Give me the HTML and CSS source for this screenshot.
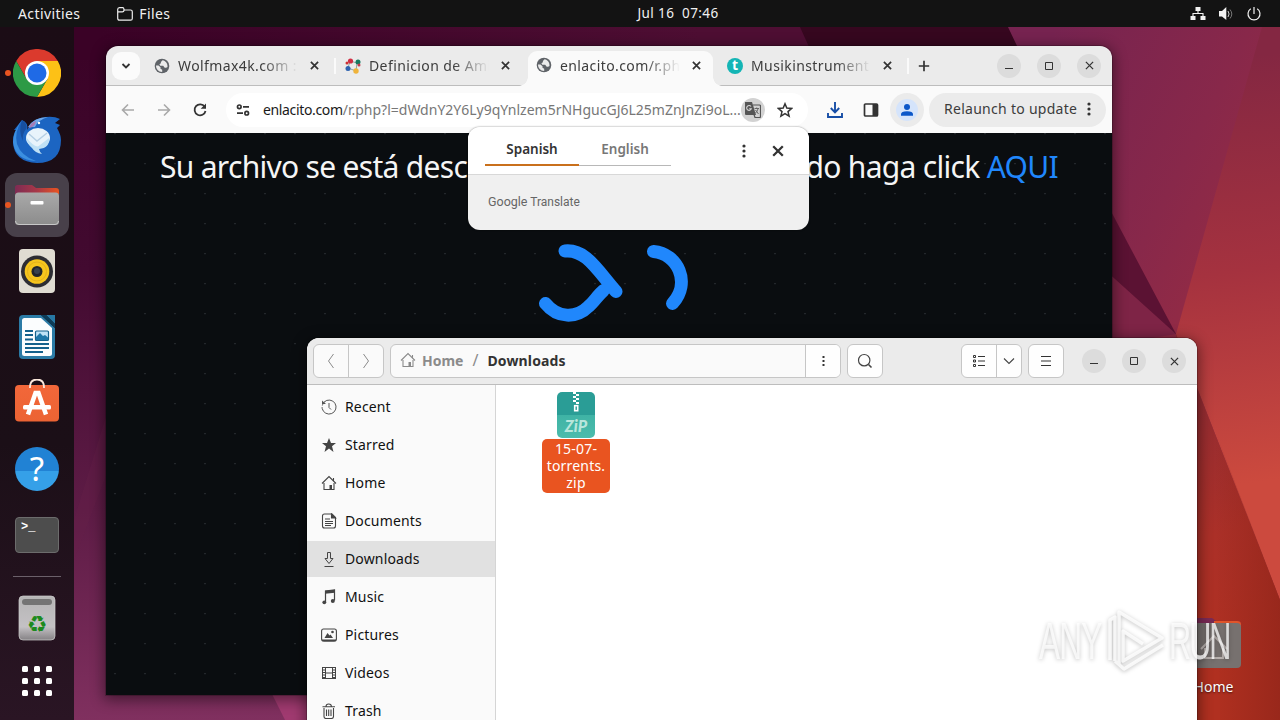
FILE: index.html
```html
<!DOCTYPE html>
<html lang="en">
<head>
    <meta charset="UTF-8" />
    <meta name="viewport" content="width=device-width, initial-scale=1.0" />
    <title>Desktop</title>
    <link rel="stylesheet" href="styles.css">
</head>
<body>
    <!-- shared icons -->
    <svg class="sprite" width="0" height="0">
        <symbol id="close" viewBox="0 0 10 10"><path d="M1 1l8 8M9 1l-8 8" fill="none" stroke="currentColor" stroke-width="1.9"/></symbol>
        <symbol id="globe" viewBox="0 0 16 16"><circle cx="8" cy="8" r="7.3" fill="#5f6368"/><path d="M2 7.500h2.500l2 1.800v1.400l1.700 1v2.200C4.400 13.800 2 11.200 2 7.500zM8.600 2.200l-1.700 1.700v1.300l-1.500 1 .8 1.500h3l1.500 2h1.400l1.400-.8c.4-3.400-2-6.200-4.900-6.700z" fill="#ebebeb"/></symbol>
        <symbol id="dots" viewBox="0 0 4 14"><circle cx="2" cy="2" r="1.6"/><circle cx="2" cy="7" r="1.6"/><circle cx="2" cy="12" r="1.6"/></symbol>
        <symbol id="home" viewBox="0 0 16 16"><path d="M1 8.500l7-7 7 7M3 8v6.500h10V8M12.500 5.500V3" fill="none" stroke="currentColor" stroke-width="1.1"/><path d="M8.500 10H11v4.500H8.500z" fill="currentColor"/></symbol>
    </svg>

    <header class="topbar">
        <div class="topbar-left">
            <span class="activities">Activities</span>
            <svg width="16" height="16" viewBox="0 0 16 16" fill="none" stroke="#eee" stroke-width="1.2"><path d="M.7 12.300V3.500Q.7 1.600 2.500 1.600h3.300q1 0 1 1.200t1 1.200h5.700q1.800 0 1.800 1.800v6.600q0 1.800-1.800 1.800h-11q-1.800 0-1.800-1.900zM.7 5.800h4.600q1.600 0 1.800-1.700"/></svg>
            <span class="app-name">Files</span>
        </div>
        <div class="clock">Jul 16&nbsp; 07:46</div>
        <div class="tray">
            <svg width="16" height="16" viewBox="0 0 16 16" fill="#f2f2f2"><path d="M5.500 1h5v4h-5zM.5 10h5v4h-5zM10.500 10h5v4h-5z"/><path d="M8 5v3M3 10.500V7.500h10v3" fill="none" stroke="#f2f2f2" stroke-width="1.1"/></svg>
            <svg width="16" height="16" viewBox="0 0 16 16"><path d="M1 5h3l4.300-4v13L4 10.500H1z" fill="#f2f2f2"/><path d="M10 5q2.200 3 0 6" fill="none" stroke="#ccc"/><path d="M12 3.500q3.600 4.500 0 9" fill="none" stroke="#777"/></svg>
            <svg width="16" height="16" viewBox="0 0 16 16" fill="none" stroke="#f2f2f2" stroke-width="1.2"><path d="M8 1v7M4.800 2.800a6 6 0 1 0 6.400 0"/></svg>
        </div>
    </header>

    <div class="desktop">
        <svg class="wallpaper" width="1280" height="693" viewBox="0 27 1280 693" preserveAspectRatio="none">
            <defs>
                <linearGradient id="wl" x1="0" y1="0" x2="0" y2="1"><stop offset="0" stop-color="#3a0226"/><stop offset=".35" stop-color="#420a30"/><stop offset=".7" stop-color="#5e1c46"/><stop offset="1" stop-color="#80305f"/></linearGradient>
                <linearGradient id="wt" gradientUnits="userSpaceOnUse" x1="100" y1="0" x2="700" y2="0"><stop offset="0" stop-color="#3a0226"/><stop offset="1" stop-color="#4e0e33"/></linearGradient>
                <linearGradient id="wr" gradientUnits="userSpaceOnUse" x1="1040" y1="60" x2="1280" y2="180"><stop offset="0" stop-color="#762350"/><stop offset=".65" stop-color="#88284a"/><stop offset="1" stop-color="#942b44"/></linearGradient>
                <linearGradient id="wr2" gradientUnits="userSpaceOnUse" x1="1220" y1="60" x2="1275" y2="480"><stop offset="0" stop-color="#842742"/><stop offset=".5" stop-color="#a5323f"/><stop offset="1" stop-color="#cc4a3e"/></linearGradient>
                <linearGradient id="wr3" gradientUnits="userSpaceOnUse" x1="1190" y1="400" x2="1270" y2="660"><stop offset="0" stop-color="#932c32"/><stop offset=".5" stop-color="#ab3028"/><stop offset="1" stop-color="#b03020"/></linearGradient>
                <linearGradient id="wr4" x1="0" y1="0" x2="1" y2="0"><stop offset="0" stop-color="#8f2419" stop-opacity="0"/><stop offset="1" stop-color="#8f2419" stop-opacity=".7"/></linearGradient>
            </defs>
            <rect y="27" width="1280" height="693" fill="url(#wl)"/>
            <path d="M74 27H900V60H74z" fill="url(#wt)"/>
            <path d="M800 27H1020V60H815z" fill="#36071f"/>
            <path d="M74 520l34-110v60L74 560z" fill="#662048" opacity=".3"/>
            <path d="M272 694l13 26h40v-40h-50z" fill="#a03a70"/>
            <path d="M1008 27H1280V720H1105V230z" fill="url(#wr)"/>
            <path d="M1262 27H1280V600L1176 334z" fill="url(#wr2)"/>
            <path d="M1105 200l71 134H1105z" fill="#5b1233"/>
            <path d="M1105 270l71 64-60 10h-11z" fill="#7e2446"/>
            <path d="M1176 334L1280 600V720H1176z" fill="url(#wr3)"/>
            <path d="M1215 430l65 170v120h-60z" fill="url(#wr4)"/>
        </svg>

        <nav class="dock">
            <div class="dock-item running">
                <svg width="48" height="48" viewBox="0 0 48 48"><path d="M3.200 12A24 24 0 0 1 44.800 12H24v12L13.600 30z" fill="#db3a2d"/><path d="M44.800 12A24 24 0 0 1 24 48l10.400-18L24 24V12z" fill="#fdc116"/><path d="M24 48A24 24 0 0 1 3.200 12l10.400 18L24 24l10.400 6z" fill="#2d9a46"/><circle cx="24" cy="24" r="12" fill="#fff"/><circle cx="24" cy="24" r="9.500" fill="#1f6ae6"/></svg>
            </div>
            <div class="dock-item">
                <svg width="48" height="48" viewBox="0 0 48 48"><path d="M1 15Q5 10 9 5q7 3 5 10 5-12 19-13 8-1 14 2l-5 4 5 2-3 3q4 7 4 12 0 23-24 23Q1 47 0 27q0-8 3-12z" fill="#1c65c2"/><path d="M9 5q-8 12-5 24 4 12 19 17Q2 45 0 27q0-10 9-22z" fill="#3b8fe0"/><path d="M9 5q6 4 4 9-4 5-3 12-5-9-1-21z" fill="#174f9f"/><path d="M15 12q6-10 20-10-10 3-13 10z" fill="#6fa8e8"/><path d="M16 13q1-5 7-7-1 6-7 7z" fill="#a77bb5"/><ellipse cx="25" cy="23" rx="12" ry="10" fill="#e8f3fb"/><path d="M13 22q10 13 14 8l9-7q1 10-10 11 1 4 3 5-7-1-10-6-5-4-6-11z" fill="#bfe0f5"/><path d="M16 19l8 7 10-8" fill="none" stroke="#b5cfe4" stroke-width="1.4"/><circle cx="26" cy="8" r="1.200" fill="#fff"/></svg>
            </div>
            <div class="dock-item running selected">
                <svg width="48" height="48" viewBox="0 0 48 48"><defs><linearGradient id="fo"><stop stop-color="#7d2b53"/><stop offset=".5" stop-color="#a83848"/><stop offset="1" stop-color="#e95420"/></linearGradient><linearGradient id="fg" x2="0" y2="1"><stop stop-color="#a9a9a9"/><stop offset="1" stop-color="#8c8c8c"/></linearGradient></defs><path d="M2 13V6.500Q2 4 4.500 4H19l4 3h20q3 0 3 3v3H2z" fill="url(#fo)"/><rect x="2" y="11.500" width="44" height="32.500" rx="3.500" fill="url(#fg)"/><path d="M2.500 40q0 3.500 3.500 3.500h36q3.500 0 3.500-3.500" fill="none" stroke="#c8c8c8"/><rect x="17.500" y="20" width="13" height="3.500" rx="1" fill="#fff"/></svg>
            </div>
            <div class="dock-item">
                <svg width="48" height="48" viewBox="0 0 48 48"><rect x="6" y="2" width="36" height="44" rx="4" fill="#e0dcd2"/><circle cx="24" cy="24.500" r="16" fill="#2d2d33"/><circle cx="24" cy="24.500" r="12.300" fill="#f6c51d"/><circle cx="24" cy="24.500" r="9.500" fill="none" stroke="#e3b11c" stroke-width="1"/><circle cx="24" cy="24.500" r="5.500" fill="#22252b"/><circle cx="24" cy="24" r="3" fill="#38414e"/></svg>
            </div>
            <div class="dock-item">
                <svg width="48" height="48" viewBox="0 0 48 48"><path d="M10 2h18l14 13v27q0 4-4 4H10q-4 0-4-4V6q0-4 4-4z" fill="#2b7ba6"/><path d="M11.500 5H28l11 10v25.500q0 2.500-2.500 2.500h-25Q9 43 9 40.500v-33Q9 5 11.500 5z" fill="#fbfdfe"/><path d="M33 2h9v9z" fill="#2778a4"/><path d="M28 2h5l9 9v4z" fill="#0c3c58"/><path d="M12 18h8M12 22h8M12 26.500h8M12 31h24M12 35h24M12 39h18" stroke="#14618c" stroke-width="1.8"/><rect x="22.500" y="18" width="13" height="9.500" rx="1" fill="#bfe2f6" stroke="#14618c" stroke-width="1.2"/><path d="M23 27v-3l4-4 3 3 2-1 3 2.500V27z" fill="#1f77a8"/></svg>
            </div>
            <div class="dock-item">
                <svg width="48" height="48" viewBox="0 0 48 48"><defs><linearGradient id="sw" x2="0" y2="1"><stop stop-color="#f2673a"/><stop offset="1" stop-color="#ec6333"/></linearGradient></defs><rect x="2" y="6" width="44" height="36.500" rx="4" fill="url(#sw)"/><path d="M17 9V8q0-7.500 7-7.500T31 8v1" fill="none" stroke="#fbe8dc" stroke-width="1.8"/><path d="M15 35.500l7.500-21.500h3L33 35.500" fill="none" stroke="#fff" stroke-width="4.5"/><rect x="10" y="26" width="28" height="4.500" rx="1.500" fill="#fff"/></svg>
            </div>
            <div class="dock-item">
                <div class="help-icon">?</div>
            </div>
            <div class="dock-item">
                <div class="terminal-icon">&gt;_</div>
            </div>
            <div class="dock-line"></div>
            <div class="dock-item">
                <svg width="48" height="48" viewBox="0 0 48 48"><defs><linearGradient id="tr" x2="0" y2="1"><stop stop-color="#b5b5b5"/><stop offset=".7" stop-color="#c4c1c4"/><stop offset="1" stop-color="#858285"/></linearGradient></defs><rect x="6" y="2" width="36" height="44" rx="4" fill="url(#tr)" stroke="#cfcfcf" stroke-width=".7"/><rect x="9" y="5" width="30" height="6" rx="3" fill="#747474"/></svg>
                <span class="recycle">♻</span>
            </div>
            <div class="dock-item">
                <div class="apps-grid"><i></i><i></i><i></i><i></i><i></i><i></i><i></i><i></i><i></i></div>
            </div>
        </nav>

        <div class="desktop-icon">
            <svg width="50" height="52" viewBox="0 0 50 52"><path d="M1 14V3.500Q1 1 4 1h16l4 3h20q5 0 5 3v7z" fill="#7a2a55"/><path d="M22 4h23q4 0 4 3v4H22z" fill="#e0552b"/><rect x="1" y="6" width="48" height="45" rx="4" fill="#77716f"/><path d="M9 32l13-13 13 13M13 31v10h18V31" fill="none" stroke="#b9b2af" stroke-width="2"/></svg>
            <span>Home</span>
        </div>

        <section class="window browser">
            <div class="tab-strip">
                <div class="tab-search"><svg width="10" height="8" viewBox="0 0 10 8"><path d="M1.500 2L5 5.500 8.500 2" fill="none" stroke="#333" stroke-width="1.8"/></svg></div>
                <div class="tab">
                    <svg width="16" height="16"><use href="#globe"/></svg>
                    <span class="tab-title">Wolfmax4k.com :</span>
                    <svg class="x" width="9" height="9"><use href="#close"/></svg>
                </div>
                <div class="tab line">
                    <svg width="16" height="16" viewBox="0 0 16 16"><path d="M5 3l7 2-1 8-8-3z" fill="none" stroke="#8da6a0"/><circle cx="5.500" cy="3" r="2.600" fill="#d02f45"/><circle cx="13" cy="4" r="2.500" fill="#157a62"/><circle cx="3" cy="10.500" r="2.500" fill="#2d62b0"/><circle cx="11" cy="13" r="2.700" fill="#efb33a"/><circle cx="2" cy="5" r="1.500" fill="#c33"/><circle cx="14" cy="7" r="1.500" fill="#c33d4d"/></svg>
                    <span class="tab-title">Definicion de Ami</span>
                    <svg class="x" width="9" height="9"><use href="#close"/></svg>
                </div>
                <div class="tab active">
                    <svg width="16" height="16"><use href="#globe"/></svg>
                    <span class="tab-title">enlacito.com/r.php</span>
                    <svg class="x" width="9" height="9"><use href="#close"/></svg>
                </div>
                <div class="tab">
                    <span class="t-logo">t</span>
                    <span class="tab-title">Musikinstrument</span>
                    <svg class="x" width="9" height="9"><use href="#close"/></svg>
                </div>
                <div class="new-tab"><svg width="12" height="12" viewBox="0 0 12 12"><path d="M6 .8v10.400M.8 6h10.400" stroke="#333" stroke-width="1.7"/></svg></div>
                <div class="win-buttons">
                    <span><svg width="12" height="12" viewBox="0 0 12 12"><path d="M2 8.500h8" stroke="#333"/></svg></span>
                    <span><svg width="12" height="12" viewBox="0 0 12 12"><path d="M2.500 2.500h7v7h-7z" fill="none" stroke="#333"/></svg></span>
                    <span><svg width="9" height="9" viewBox="0 0 10 10"><path d="M1 1l8 8M9 1l-8 8" stroke="#333" stroke-width="1.4"/></svg></span>
                </div>
            </div>

            <div class="toolbar">
                <svg class="nav-icon" width="16" height="16" viewBox="0 0 16 16"><path d="M14 8H3M8 2.500L2.500 8 8 13.500" fill="none" stroke="#a9a9a9" stroke-width="1.6"/></svg>
                <svg class="nav-icon" width="16" height="16" viewBox="0 0 16 16"><path d="M2 8h11M8 2.500L13.500 8 8 13.500" fill="none" stroke="#a9a9a9" stroke-width="1.6"/></svg>
                <svg class="nav-icon" width="16" height="16" viewBox="0 0 16 16"><path d="M12.700 4.800A5.500 5.500 0 1 0 13.500 9" fill="none" stroke="#333" stroke-width="1.8"/><path d="M14 1.500v5.300H8.700z" fill="#333"/></svg>
                <div class="omnibox">
                    <svg width="14" height="14" viewBox="0 0 14 14" fill="none" stroke="#333" stroke-width="1.7"><circle cx="3.300" cy="3.800" r="1.800"/><path d="M7 3.800h6M1 10.200h6"/><circle cx="10.700" cy="10.200" r="1.800"/></svg>
                    <span class="url"><b>enlacito.com</b>/r.php?l=dWdnY2Y6Ly9qYnlzem5rNHgucGJ6L25mZnJnZi9oL...</span>
                    <span class="translate-btn"><svg width="16" height="16" viewBox="0 0 16 16"><path d="M0 0h7l4 13H1Q0 13 0 12z" fill="#555"/><path d="M8 3h6.500q1 0 1 1v10.500q0 1-1 1H10l-1-3" fill="none" stroke="#555" stroke-width="1.2"/><path d="M6 4.500a2.400 2.400 0 1 0 .3 2.300H4.200" fill="none" stroke="#d4d4d4" stroke-width="1.1"/><path d="M9.500 6.500H14M11.700 5.500v1M13 7q-1 3-3 4.500M10.500 8l3 4" fill="none" stroke="#666"/></svg></span>
                    <svg width="16" height="16" viewBox="0 0 16 16"><path d="M8 1.800l1.800 4.300 4.700.4L11 9.600l1.100 4.600L8 11.700l-4.100 2.500L5 9.600 1.500 6.500l4.700-.4z" fill="none" stroke="#333" stroke-width="1.5"/></svg>
                </div>
                <svg class="tool" width="18" height="18" viewBox="0 0 18 18"><path d="M9 1v10M4.800 7L9 11.300 13.200 7M2 12v4h14v-4" fill="none" stroke="#174ea6" stroke-width="1.9"/></svg>
                <svg class="tool panel" width="16" height="16" viewBox="0 0 16 16"><rect x="1.500" y="2" width="13" height="12" rx="1" fill="none" stroke="#333" stroke-width="1.7"/><path d="M9.500 2h5v12h-5z" fill="#333"/></svg>
                <span class="profile"><i><svg width="14" height="14" viewBox="0 0 14 14" fill="#0b57c9"><circle cx="7" cy="4" r="3"/><path d="M1 12.800v-1.500Q1 8.300 7 8.300t6 3v1.500z"/></svg></i></span>
                <div class="relaunch">Relaunch to update<svg width="4" height="14" fill="#333"><use href="#dots"/></svg></div>
            </div>

            <div class="page">
                <h1><span>Su archivo se está desc</span><span>do haga click <a>AQUI</a></span></h1>
                <svg class="loading" width="160" height="90" viewBox="530 240 160 90" fill="none" stroke="#2087fc" stroke-width="13" stroke-linecap="round"><path d="M565 251c21-2 32 19 51 40.500M545.500 303.500c12 15 31 15 43 3 6-5 9-11 15-16M653.500 251.500c24 2 38 31 19 52"/></svg>
            </div>

            <div class="translate">
                <div class="translate-top">
                    <span class="lang on">Spanish</span>
                    <span class="lang">English</span>
                    <svg class="t-dots" width="4" height="14" fill="#333"><use href="#dots"/></svg>
                    <svg class="t-close" width="12" height="12"><use href="#close"/></svg>
                </div>
                <div class="translate-bottom"><b>Google</b> Translate</div>
            </div>
        </section>

        <section class="window files">
            <div class="files-header">
                <div class="group nav">
                    <span><svg width="16" height="18" viewBox="0 0 16 18"><path d="M10.500 2l-5 7 5 7" fill="none" stroke="#8b8b8b"/></svg></span>
                    <span><svg width="16" height="18" viewBox="0 0 16 18"><path d="M5.500 2l5 7-5 7" fill="none" stroke="#8b8b8b"/></svg></span>
                </div>
                <div class="group path">
                    <div class="crumbs">
                        <svg width="16" height="16"><use href="#home"/></svg>
                        <span class="crumb">Home</span><span class="slash">/</span><span class="crumb current">Downloads</span>
                    </div>
                    <span class="menu"><svg width="3" height="12" viewBox="0 0 3 12" fill="#333"><path d="M.5 1h2v2h-2zM.5 5h2v2h-2zM.5 9h2v2h-2z"/></svg></span>
                </div>
                <div class="group search"><span><svg width="16" height="16" viewBox="0 0 16 16"><circle cx="7.200" cy="7.200" r="5.700" fill="none" stroke="#444" stroke-width="1.2"/><path d="M11.500 11.500l3 3" stroke="#444" stroke-width="1.6"/></svg></span></div>
                <div class="group view">
                    <span><svg width="14" height="14" viewBox="0 0 14 14" fill="none" stroke="#333"><path d="M1.500 1.500h2v2h-2zM1.500 6h2v2h-2zM1.500 10.500h2v2h-2zM6 2.500h7M6 7h7M6 11.500h7"/></svg></span>
                    <span><svg width="12" height="8" viewBox="0 0 12 8"><path d="M1 1.500l5 5 5-5" fill="none" stroke="#444" stroke-width="1.1"/></svg></span>
                </div>
                <div class="group burger"><span><svg width="12" height="12" viewBox="0 0 12 12"><path d="M1 1.500h10M1 6h10M1 10.500h10" stroke="#333"/></svg></span></div>
                <div class="win-buttons">
                    <span><svg width="12" height="12" viewBox="0 0 12 12"><path d="M2 8.500h8" stroke="#333"/></svg></span>
                    <span><svg width="12" height="12" viewBox="0 0 12 12"><path d="M2.500 2.500h7v7h-7z" fill="none" stroke="#333"/></svg></span>
                    <span><svg width="9" height="9" viewBox="0 0 10 10"><path d="M1 1l8 8M9 1l-8 8" stroke="#333" stroke-width="1.4"/></svg></span>
                </div>
            </div>
            <div class="files-body">
                <ul class="places">
                    <li><svg width="16" height="16" viewBox="0 0 16 16" fill="none" stroke="#555"><path d="M3.200 3A7 7 0 1 1 1.200 9.500"/><path d="M1.200 9.500A7 7 0 0 1 3.500 3" stroke-dasharray="1.5 1.5"/><path d="M8 4v4.500l2 2"/><path d="M1 1.500v3.500h4z" fill="#555" stroke="none"/></svg>Recent</li>
                    <li><svg width="16" height="16" viewBox="0 0 16 16"><path d="M8 1l2 5h5l-4 3.300L12.500 15 8 11.500 3.500 15 5 9.300 1 6h5z" fill="#444"/></svg>Starred</li>
                    <li><svg width="16" height="16"><use href="#home"/></svg>Home</li>
                    <li><svg width="16" height="16" viewBox="0 0 16 16" fill="none" stroke="#444" stroke-width="1.1"><path d="M1.500 3q0-2 2-2H11l3.500 3.500V13q0 2-2 2h-9q-2 0-2-2zM4 6h5M4 8.500h8M4 10.500h8M4 12.500h6"/><path d="M10.500 1L14.500 5h-4z" fill="#444"/></svg>Documents</li>
                    <li class="current"><svg width="16" height="16" viewBox="0 0 16 16" fill="none" stroke="#444"><path d="M6.500 1.500h3v6h2.500L8 12.500 4 7.500h2.500zM3.500 15.500h9"/></svg>Downloads</li>
                    <li><svg width="16" height="16" viewBox="0 0 16 16"><path d="M4.500 13V2l9-1v10.500" fill="none" stroke="#444" stroke-width="1.2"/><path d="M4 1.700L14 .7v3L4 4.700z" fill="#444"/><circle cx="3.300" cy="13.300" r="1.900" fill="#444"/><circle cx="11.800" cy="12" r="2" fill="#444"/></svg>Music</li>
                    <li><svg width="16" height="16" viewBox="0 0 16 16"><rect x=".6" y="2" width="14.800" height="12" rx="2" fill="none" stroke="#444" stroke-width="1.1"/><path d="M1 12.500h14v1q-1 1-2 1H3q-2 0-2-2zM3.500 11l3-5 2 2.500 1-1 2.500 3.500z" fill="#444"/><circle cx="11.500" cy="5" r="1.300" fill="#444"/></svg>Pictures</li>
                    <li><svg width="16" height="16" viewBox="0 0 16 16" fill="none" stroke="#444"><path d="M1.500 2v12M14.500 2v12M4.500 2v12M11.500 2v12M4 8h8M2 2.500h12M2 13.500h12"/><path d="M3 2v12M13 2v12" stroke-width="2" stroke-dasharray="1 1.5"/></svg>Videos</li>
                    <li><svg width="16" height="16" viewBox="0 0 16 16" fill="none" stroke="#444" stroke-width="1.1"><path d="M1.500 3.700h12.500M5 3.500Q5 1 7.700 1t2.700 2.500M3 5v8.500q0 2 2 2h5.500q2 0 2-2V5M5.500 6.500v6.500M7.700 6.500v6.500M10 6.500v6.500"/></svg>Trash</li>
                </ul>
                <div class="listing">
                    <div class="file">
                        <div class="zip-icon"><svg width="6" height="20" viewBox="0 0 6 20"><path d="M0 0h3v2H0zM3 2h3v2H3zM0 4h3v2H0zM3 6h3v2H3zM0 8h3v2H0zM3 10h3v2H3z" fill="#fff"/><rect x="1.700" y="13.700" width="3" height="5" fill="#2a9d96" stroke="#fff" stroke-width="1.6"/></svg><em>ZiP</em></div>
                        <div class="file-name">15-07-<br>torrents.<br>zip</div>
                    </div>
                </div>
            </div>
        </section>

        <svg class="watermark" width="210" height="84" viewBox="1030 598 210 84">
            <g class="mark">
                <text transform="translate(1039 659) scale(.62 1)" textLength="102">ANY</text>
                <text transform="translate(1169 659) scale(.6 1)" textLength="104">RUN</text>
                <path d="M1110 660V620l5-3v44M1119 664V612l43 26-39 23v-30l20 13M1115 661l9 8 39-24"/>
            </g>
        </svg>
    </div>
</body>
</html>
```
FILE: styles.css
```css
* {
    box-sizing: border-box;
}

body {
    margin: 0;
    width: 1280px;
    height: 720px;
    overflow: hidden;
    font-family: "Noto Sans", "Open Sans", sans-serif;
    font-size: 14px;
    color: #222;
    background-color: #3a0226;
}

.sprite {
    position: absolute;
}

svg {
    display: block;
    flex-shrink: 0;
}

/* Top bar */
.topbar {
    height: 27px;
    background-color: #131313;
    color: #f0f0f0;
    letter-spacing: 0.4px;
    display: grid;
    grid-template-columns: 1fr auto 1fr;
    align-items: center;
}

.topbar-left {
    display: flex;
    align-items: center;
    padding-left: 18px;
}

.activities {
    margin-right: 37px;
}

.app-name {
    margin-left: 6px;
}

.clock {
    font-size: 13.5px;
    padding-left: 76px;
    margin-top: -2px;
}

.tray {
    display: flex;
    justify-content: flex-end;
    gap: 12px;
    padding-right: 18px;
}

.desktop {
    position: relative;
    height: 693px;
    overflow: hidden;
}

.wallpaper {
    position: absolute;
    top: 0;
    left: 0;
}

/* Dock */
.dock {
    position: relative;
    width: 74px;
    height: 693px;
    padding: 14px 5px 0;
    background: linear-gradient(#1b0c15, #1b0f17 60%, #2a1524);
    display: flex;
    flex-direction: column;
    gap: 2px;
}

.dock-item {
    position: relative;
    height: 64px;
    flex-shrink: 0;
    border-radius: 12px;
    display: flex;
    align-items: center;
    justify-content: center;
}

.dock-item.selected {
    background-color: #48404a;
}

.dock-item.running::before {
    content: "";
    position: absolute;
    left: 0;
    top: 29px;
    width: 6px;
    height: 6px;
    border-radius: 50%;
    background-color: #e95420;
}

.help-icon {
    width: 44px;
    height: 44px;
    border-radius: 50%;
    background: linear-gradient(#2182d4 55%, #35a0e8 55%);
    color: #fff;
    font-size: 33px;
    line-height: 43px;
    text-align: center;
}

.terminal-icon {
    width: 44px;
    height: 36px;
    border-radius: 4px;
    border: 1px solid #6c6c6c;
    background-color: #4d4d4d;
    color: #fff;
    font: bold 12px/14px "Liberation Mono", monospace;
    padding: 2px 5px;
}

.dock-line {
    width: 48px;
    height: 1px;
    background-color: #6b606a;
    margin: 7px 8px 7px;
}

.dock-line + .dock-item {
    margin-bottom: -3px;
}

.recycle {
    position: absolute;
    left: 21px;
    top: 26px;
    width: 22px;
    text-align: center;
    color: #1d8a1d;
    font: bold 23px/24px "DejaVu Sans", sans-serif;
}

.apps-grid {
    display: grid;
    grid-template-columns: repeat(3, 6px);
    gap: 6px;
}

.apps-grid i {
    height: 6px;
    border-radius: 1.5px;
    background-color: #fff;
}

.desktop-icon {
    position: absolute;
    left: 1192px;
    top: 590px;
    width: 50px;
    display: flex;
    flex-direction: column;
    align-items: center;
    color: #fff;
    gap: 8px;
    text-shadow: 0 1px 2px rgba(0, 0, 0, 0.6);
}

.desktop-icon span {
    margin-left: -7px;
}

/* Windows */
.window {
    position: absolute;
    border-radius: 12px 12px 0 0;
    box-shadow: 0 3px 14px 2px rgba(0, 0, 0, 0.45), 0 0 0 1px rgba(0, 0, 0, 0.2);
}

.browser {
    left: 106px;
    top: 19px;
    width: 1006px;
    height: 649px;
}

.files {
    left: 307px;
    top: 311px;
    width: 890px;
    height: 400px;
    background-color: #fff;
}

.win-buttons {
    display: flex;
    gap: 16px;
}

.win-buttons span {
    width: 24px;
    height: 24px;
    border-radius: 50%;
    background-color: #dcdcdc;
    display: flex;
    align-items: center;
    justify-content: center;
}

/* Browser tabs */
.tab-strip {
    height: 40px;
    padding-left: 6px;
    background-color: #ebebeb;
    border-bottom: 1px solid #bdbdbd;
    border-radius: 12px 12px 0 0;
    display: flex;
    align-items: center;
}

.tab-search {
    width: 28px;
    height: 28px;
    margin-right: 3px;
    border-radius: 9px;
    background-color: #fbfbfb;
    display: flex;
    align-items: center;
    justify-content: center;
}

.tab {
    position: relative;
    width: 191px;
    height: 34px;
    padding-left: 11px;
    display: flex;
    align-items: center;
    color: #3c3c3c;
}

.tab-title {
    width: 120px;
    margin-left: 8px;
    overflow: hidden;
    white-space: nowrap;
    letter-spacing: 0.4px;
    -webkit-mask-image: linear-gradient(to right, #000 70%, transparent 100%);
    mask-image: linear-gradient(to right, #000 70%, transparent 100%);
}

.tab .x {
    margin-left: 12px;
    color: #333;
}

.tab.line::before,
.new-tab::before {
    content: "";
    position: absolute;
    left: 0;
    top: 9px;
    width: 2px;
    height: 16px;
    background-color: #fafafa;
}

.tab.active {
    height: 35px;
    align-self: flex-end;
    margin-bottom: -1px;
    padding-bottom: 7px;
}

.tab.active::before {
    content: "";
    position: absolute;
    left: 3px;
    right: 3px;
    top: 0;
    bottom: 0;
    border-radius: 9px 9px 0 0;
    background-color: #fafafa;
}

.tab.active > * {
    position: relative;
}

.tab.active::after {
    content: "";
    position: absolute;
    left: -6px;
    right: -6px;
    bottom: 0;
    height: 9px;
    background:
        radial-gradient(circle at 0 0, transparent 8.5px, #fafafa 9px) left / 9px 9px no-repeat,
        radial-gradient(circle at 100% 0, transparent 8.5px, #fafafa 9px) right / 9px 9px no-repeat;
}

.t-logo {
    width: 16px;
    height: 16px;
    border-radius: 50%;
    background-color: #14b5b5;
    color: #fff;
    font: bold 14px/14px "Open Sans", sans-serif;
    text-align: center;
}

.new-tab {
    position: relative;
    height: 34px;
    width: 90px;
    padding-left: 11px;
    display: flex;
    align-items: center;
}

/* Browser toolbar */
.toolbar {
    height: 47px;
    padding: 0 6px 0 14px;
    background-color: #fafafa;
    display: flex;
    align-items: center;
}

.nav-icon {
    margin-right: 20px;
}

.omnibox {
    width: 582px;
    height: 34px;
    margin-left: -2px;
    padding: 0 15px 0 10px;
    border-radius: 17px;
    background-color: #fff;
    display: flex;
    align-items: center;
}

.url {
    width: 480px;
    margin: -1px 0 0 13px;
    white-space: nowrap;
    color: #777;
}

.url b {
    font-weight: normal;
    letter-spacing: -0.35px;
    color: #1a1a1a;
}

.translate-btn {
    width: 24px;
    height: 24px;
    margin: 0 12px 0 -2px;
    border-radius: 50%;
    background-color: #d2d2d2;
    display: flex;
    align-items: center;
    justify-content: center;
    flex-shrink: 0;
}

.tool {
    margin-left: 18px;
}

.tool.panel {
    margin-left: 19px;
}

.profile {
    width: 34px;
    height: 34px;
    margin-left: 11px;
    border-radius: 50%;
    background-color: #ebebeb;
    display: flex;
    align-items: center;
    justify-content: center;
}

.profile i {
    width: 22px;
    height: 22px;
    border-radius: 50%;
    background-color: #d5e4fb;
    display: flex;
    align-items: center;
    justify-content: center;
}

.relaunch {
    width: 177px;
    height: 34px;
    margin-left: 5px;
    padding: 0 15px 2px;
    border-radius: 17px;
    background-color: #ebebeb;
    color: #3c3c3c;
    letter-spacing: 0.28px;
    white-space: nowrap;
    display: flex;
    align-items: center;
    justify-content: space-between;
}

/* Web page */
.page {
    height: 562px;
    background-color: #0a0d10;
    background-image: radial-gradient(circle at 9px 0.5px, #23272b 0.8px, transparent 1.2px);
    background-size: 30px 30px;
    overflow: hidden;
}

.page h1 {
    height: 42px;
    margin: 13px 54px 0;
    font-size: 30px;
    line-height: 41px;
    font-weight: normal;
    letter-spacing: -0.7px;
    color: #f5f5f5;
    display: flex;
    justify-content: space-between;
    white-space: nowrap;
}

.page h1 a {
    color: #2087fc;
}

.loading {
    margin: 52px 0 0 424px;
}

/* Translate popup */
.translate {
    position: absolute;
    left: 362px;
    top: 81px;
    width: 341px;
    height: 103px;
    border-radius: 12px;
    background-color: #f0f0f0;
    box-shadow: 0 0 2px rgba(0, 0, 0, 0.5);
    overflow: hidden;
}

.translate-top {
    height: 48px;
    padding: 0 25px 8px 17px;
    background-color: #fff;
    border-bottom: 1px solid #d8d8d8;
    display: flex;
    align-items: flex-end;
}

.lang {
    width: 92px;
    height: 32px;
    border-bottom: 1px solid #b8b8b8;
    color: #777;
    font-weight: 600;
    font-size: 13.5px;
    line-height: 31px;
    text-align: center;
}

.lang.on {
    width: 94px;
    border-bottom: 2px solid #c9701c;
    color: #333;
}

.t-dots {
    margin: 0 0 8px 71px;
}

.t-close {
    margin: 0 0 9px auto;
    color: #333;
}

.translate-bottom {
    padding: 18px 20px;
    font: 12px/18px Roboto, sans-serif;
    color: #666;
}

.translate-bottom b {
    font-weight: 400;
    font-size: 12.5px;
}

/* File manager */
.files-header {
    height: 47px;
    padding: 0 11px 0 6px;
    background-color: #ebebeb;
    border-bottom: 1px solid #bdbdbd;
    border-radius: 12px 12px 0 0;
    display: flex;
    align-items: center;
}

.group {
    height: 34px;
    margin-right: 6px;
    border: 1px solid #c6c6c6;
    border-radius: 6px;
    background-color: #fefefe;
    display: flex;
    overflow: hidden;
}

.group > span {
    width: 34px;
    display: flex;
    align-items: center;
    justify-content: center;
}

.group > * + span {
    width: 35px;
    border-left: 1px solid #c6c6c6;
}

.group.nav,
.group.path {
    background-color: #fafafa;
}

.crumbs {
    width: 414px;
    padding: 0 0 2px 9px;
    display: flex;
    align-items: center;
    color: #8b8b8b;
    font-weight: bold;
}

.group.path .menu {
    background-color: #fefefe;
}

.crumb {
    margin-left: 6px;
}

.slash {
    margin: 0 3px 0 9px;
    font-weight: normal;
    font-size: 16px;
}

.crumb.current {
    color: #333;
    letter-spacing: 0.15px;
}

.group.view {
    margin-left: 72px;
}

.group.view span + span {
    width: 25px;
}

.files .win-buttons {
    margin-left: 12px;
}

.files-body {
    display: flex;
    height: 353px;
}

.places {
    width: 189px;
    margin: 0;
    padding: 4px 0 0;
    list-style: none;
    background-color: #fafafa;
    border-right: 1px solid #d5d5d5;
}

.places li {
    height: 36px;
    margin-bottom: 2px;
    padding: 0 0 1px 14px;
    display: flex;
    align-items: center;
    gap: 8px;
    color: #111;
    letter-spacing: 0.15px;
}

.places li svg {
    color: #444;
}

.places li.current {
    background-color: #e1e1e1;
}

.listing {
    flex: 1;
    padding: 7px 46px;
}

.file {
    width: 68px;
    display: flex;
    flex-direction: column;
    align-items: center;
}

.zip-icon {
    width: 38px;
    height: 46px;
    border-radius: 5px;
    background: linear-gradient(#2a9d96 50%, #3fb3a5 50%, #4cbcac);
    display: flex;
    flex-direction: column;
    align-items: center;
}

.zip-icon em {
    margin-top: 4px;
    color: #b8e6dc;
    font: italic 900 16px/20px Lato, sans-serif;
}

.file-name {
    width: 68px;
    height: 54px;
    margin-top: 1px;
    padding-top: 1px;
    border-radius: 5px;
    background-color: #e95420;
    color: #fff;
    line-height: 17px;
    letter-spacing: 0.2px;
    text-align: center;
}

.watermark {
    position: absolute;
    left: 1030px;
    top: 571px;
}

.mark {
    fill: rgba(255, 255, 255, 0.75);
    filter: drop-shadow(0 1px 2px rgba(0, 0, 0, 0.3));
    font: 51px "Liberation Sans", sans-serif;
}

.mark path {
    fill: none;
    stroke: rgba(255, 255, 255, 0.8);
    stroke-width: 3.5;
    stroke-linejoin: round;
}
```
